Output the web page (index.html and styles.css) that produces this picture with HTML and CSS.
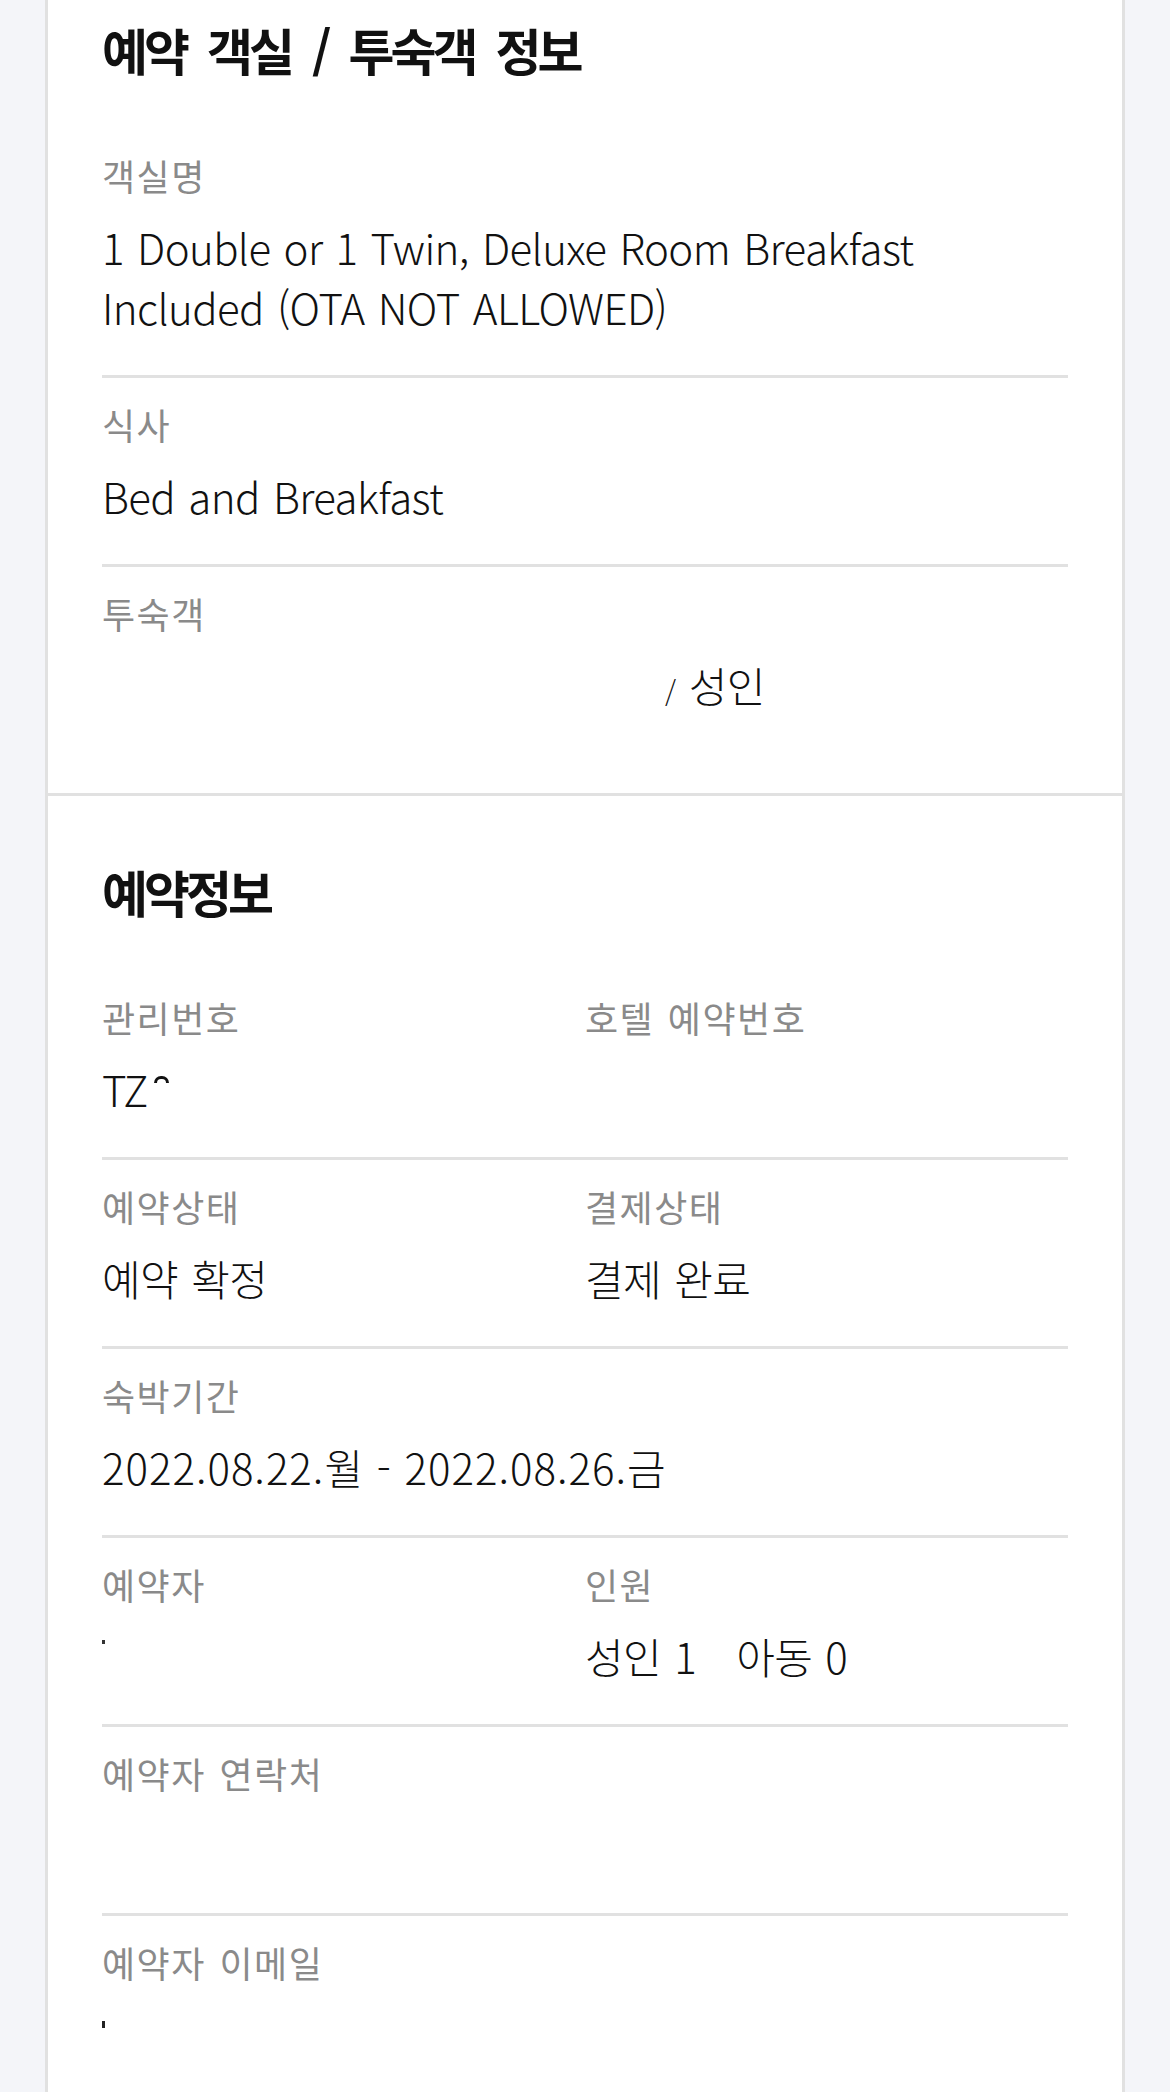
FILE: index.html
```html
<!DOCTYPE html>
<html lang="ko">
<head>
    <meta charset="UTF-8">
    <meta name="viewport" content="width=device-width, initial-scale=1.0">
    <title>예약 상세</title>
    <link rel="stylesheet" href="styles.css">
</head>
<body>
    <div class="card">
        <!-- 객실 / 투숙객 -->
        <section class="section">
            <h2 class="section-title">예약 객실 / 투숙객 정보</h2>
            <div class="row">
                <div class="field">
                    <div class="label">객실명</div>
                    <div class="value">1 Double or 1 Twin, Deluxe Room Breakfast Included (OTA NOT ALLOWED)</div>
                </div>
            </div>
            <div class="row">
                <div class="field">
                    <div class="label">식사</div>
                    <div class="value">Bed and Breakfast</div>
                </div>
            </div>
            <div class="row">
                <div class="field">
                    <div class="label">투숙객</div>
                    <div class="value"><span class="hidden-name"></span><span class="slash">/</span> 성인</div>
                </div>
            </div>
        </section>

        <!-- 예약정보 -->
        <section class="section">
            <h2 class="section-title">예약정보</h2>
            <div class="row cols">
                <div class="field">
                    <div class="label">관리번호</div>
                    <div class="value">TZ<span class="arc"></span></div>
                </div>
                <div class="field">
                    <div class="label">호텔 예약번호</div>
                    <div class="value"></div>
                </div>
            </div>
            <div class="row cols">
                <div class="field">
                    <div class="label">예약상태</div>
                    <div class="value">예약 확정</div>
                </div>
                <div class="field">
                    <div class="label">결제상태</div>
                    <div class="value">결제 완료</div>
                </div>
            </div>
            <div class="row">
                <div class="field">
                    <div class="label">숙박기간</div>
                    <div class="value date">2022.08.22.월 - 2022.08.26.금</div>
                </div>
            </div>
            <div class="row cols">
                <div class="field">
                    <div class="label">예약자</div>
                    <div class="value"><span class="speck"></span></div>
                </div>
                <div class="field">
                    <div class="label">인원</div>
                    <div class="value"><span class="count">성인 1</span><span class="count">아동 0</span></div>
                </div>
            </div>
            <div class="row">
                <div class="field">
                    <div class="label">예약자 연락처</div>
                    <div class="value"></div>
                </div>
            </div>
            <div class="row">
                <div class="field">
                    <div class="label">예약자 이메일</div>
                    <div class="value"><span class="tick"></span></div>
                </div>
            </div>
        </section>
    </div>
</body>
</html>
```

FILE: styles.css
```css
* {
    box-sizing: border-box;
}

body {
    margin: 0;
    background: #f4f5f9;
    font-family: "Noto Sans CJK KR", "Noto Sans", sans-serif;
    color: #111;
}

.card {
    width: 1080px;
    margin: 0 auto;
    background: #fff;
    border-left: 3px solid #e1e1e1;
    border-right: 3px solid #e1e1e1;
}

.section {
    padding: 14px 54px 34px;
}

.section + .section {
    border-top: 3px solid #e1e1e1;
    padding-top: 60px;
}

.section-title {
    margin: 0 0 45px;
    font-size: 50px;
    line-height: 70px;
    font-weight: 700;
    letter-spacing: -4px;
    word-spacing: 11px;
}

.row {
    padding: 20px 0 38px;
}

.row + .row {
    border-top: 3px solid #e1e1e1;
}

.row.cols {
    display: grid;
    grid-template-columns: 1fr 1fr;
}

.label {
    font-size: 36px;
    line-height: 52px;
    color: #8a8a8a;
    letter-spacing: 1.5px;
    word-spacing: 2px;
}

.value {
    margin-top: 16px;
    min-height: 60px;
    font-size: 42px;
    font-weight: 300;
    line-height: 60px;
    letter-spacing: -0.6px;
    word-spacing: 2px;
}

.value.date {
    letter-spacing: 1px;
    word-spacing: 0;
}

.hidden-name {
    display: inline-block;
    width: 563px;
}

.slash {
    font-size: 28px;
}

.arc {
    display: inline-block;
    width: 15px;
    height: 7px;
    margin: 17px 0 0 6px;
    border: 3px solid #111;
    border-bottom: none;
    border-radius: 8px 8px 0 0;
    vertical-align: top;
}

.count {
    margin-right: 40px;
}

.speck {
    display: inline-block;
    width: 3px;
    height: 4px;
    background: #333;
    vertical-align: 30px;
}

.tick {
    display: inline-block;
    width: 3px;
    height: 7px;
    background: #222;
    vertical-align: 24px;
}
```
